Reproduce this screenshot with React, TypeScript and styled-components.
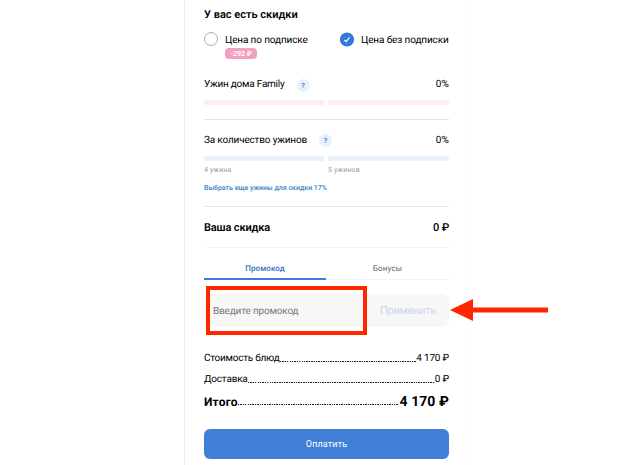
import React from "react";
import styled, { createGlobalStyle } from "styled-components";

const GlobalStyle = createGlobalStyle`
  * { box-sizing: border-box; }
  html, body { margin: 0; background: #fff; overflow: hidden; }
  body {
    font-family: Roboto, "Noto Sans", sans-serif;
    color: #080808;
    text-rendering: geometricPrecision;
  }
`;

const Page = styled.main`
  width: 624px;
  height: 465px;
  padding-left: 184px;
  background: #fff;
`;

const Panel = styled.section`
  width: 286px;
  height: 465px;
  padding: 0 20px 0 19px;
  border-left: 1px solid #ececec;
  border-right: 1px solid #fdfdfd;
`;

const Text = styled.span<{ $size: number; $weight?: number; $color?: string; $spacing?: number }>`
  font-size: ${(p) => p.$size}px;
  font-weight: ${(p) => p.$weight ?? 400};
  color: ${(p) => p.$color ?? "#000"};
  letter-spacing: ${(p) => p.$spacing ?? 0}px;
  line-height: 14px;
  white-space: nowrap;
`;

const Heading = styled.header`
  display: flex;
  align-items: center;
  height: 28px;
  padding-top: 1px;
`;

const Options = styled.div`
  display: grid;
  grid-template-columns: 136px 1fr;
  height: 42px;
  padding-top: 4px;
`;

const Option = styled.label`
  display: grid;
  grid-template-columns: 15px auto;
  grid-template-rows: 16px auto;
  column-gap: 6px;
  align-content: start;
  justify-content: start;
`;

const OptionText = styled(Text)`
  padding-top: 1px;
  line-height: 15px;
`;

const Radio = styled.span`
  width: 14px;
  height: 14px;
  border: 1.5px solid #acacac;
  border-radius: 50%;
`;

const CheckedIcon = styled.svg`
  width: 15px;
  height: 15px;
  display: block;
`;

const Badge = styled.span`
  grid-column: 2;
  display: flex;
  align-items: center;
  justify-content: center;
  width: 32px;
  height: 11px;
  border-radius: 4px;
  background: #f2a0bf;
`;

const Discount = styled.section<{ $height: number }>`
  height: ${(p) => p.$height}px;
  border-bottom: 1px solid #e2e2e2;
`;

const Row = styled.div<{ $height: number; $top?: number }>`
  display: flex;
  align-items: center;
  justify-content: space-between;
  height: ${(p) => p.$height}px;
  padding-top: ${(p) => p.$top ?? 0}px;
`;

const Name = styled.div`
  display: flex;
  align-items: center;
  gap: 12px;
`;

const Help = styled.button`
  width: 13px;
  height: 13px;
  padding: 0;
  border: 0;
  border-radius: 50%;
  background: #e6f1fd;
  color: #3880d8;
  font: 600 8px/13px Roboto, sans-serif;
`;

const Progress = styled.div`
  display: grid;
  grid-template-columns: 120px 121px;
  column-gap: 4px;
`;

const Segment = styled.span<{ $color: string }>`
  height: 5px;
  background: ${(p) => p.$color};
  &:first-child { border-radius: 2px 0 0 2px; }
  &:last-child { border-radius: 0 2px 2px 0; }
`;

const Captions = styled(Progress)`
  padding-top: 2px;
`;

const LinkRow = styled.div`
  display: flex;
  margin-top: 4px;
`;

const Summary = styled.div`
  display: flex;
  align-items: center;
  justify-content: space-between;
  height: 41px;
  padding-top: 1px;
  border-bottom: 1px solid #f5f5f5;
`;

const Tabs = styled.nav`
  display: grid;
  grid-template-columns: 122px 123px;
  height: 32px;
`;

const Tab = styled.div<{ $active?: boolean }>`
  display: flex;
  justify-content: center;
  padding-top: 14px;
  border-bottom: ${(p) => (p.$active ? "2px solid #3b7dda" : "1px solid #f5f2f1")};
`;

const Promo = styled.div`
  position: relative;
  display: grid;
  grid-template-columns: 163px 82px;
  align-items: center;
  height: 33px;
  margin-top: 14px;
  border-radius: 7px;
  background: #f7f7f8;
`;

const PromoField = styled.div`
  display: flex;
  align-items: center;
  height: 33px;
  padding: 2px 0 0 9px;
`;

const Apply = styled.div`
  display: flex;
  justify-content: center;
  padding-top: 1px;
`;

const Highlight = styled.div`
  position: absolute;
  left: 2px;
  top: -8px;
  width: 161px;
  height: 49px;
  border: 4px solid #ff2600;
`;

const Arrow = styled.svg`
  position: absolute;
  left: 246px;
  top: 5px;
  width: 98px;
  height: 22px;
`;

const Costs = styled.div`
  margin-top: 21px;
`;

const CostRow = styled.div<{ $height: number }>`
  display: flex;
  align-items: center;
  height: ${(p) => p.$height}px;
`;

const Leader = styled.span<{ $offset: number }>`
  flex: 1;
  height: 1px;
  margin-top: ${(p) => p.$offset}px;
  background: repeating-linear-gradient(90deg, #222 0 1.3px, #ddd 1.3px 2.4px);
`;

const Pay = styled.button`
  display: flex;
  align-items: center;
  justify-content: center;
  width: 100%;
  height: 30px;
  margin-top: 16px;
  padding: 0;
  border: 0;
  border-radius: 6px;
  background: #417fd9;
  font-family: inherit;
`;

export default function App() {
  return (
    <>
      <GlobalStyle />
      <Page>
        <Panel>
          <Heading><Text $size={11} $weight={600}>У вас есть скидки</Text></Heading>
          <Options>
            <Option>
              <Radio />
              <OptionText $size={10} $spacing={-0.14}>Цена по подписке</OptionText>
              <Badge><Text $size={7} $weight={600} $color="#fff">-292 ₽</Text></Badge>
            </Option>
            <Option>
              <CheckedIcon viewBox="0 0 15 15">
                <circle cx="7" cy="7.5" r="7.1" fill="#347bd9" />
                <path d="M4.2 7.8 6.1 9.7 9.6 5.3" fill="none" stroke="#fff" strokeWidth="1.2" />
              </CheckedIcon>
              <OptionText $size={10} $spacing={-0.13}>Цена без подписки</OptionText>
            </Option>
          </Options>
          <Discount $height={50}>
            <Row $height={30}>
              <Name><Text $size={10} $spacing={-0.23}>Ужин дома Family</Text><Help>?</Help></Name>
              <Text $size={10} $spacing={0.2}>0%</Text>
            </Row>
            <Progress><Segment $color="#fdecf1" /><Segment $color="#fdecf1" /></Progress>
          </Discount>
          <Discount $height={87}>
            <Row $height={36} $top={5}>
              <Name><Text $size={10} $spacing={-0.17}>За количество ужинов</Text><Help>?</Help></Name>
              <Text $size={10} $spacing={0.2}>0%</Text>
            </Row>
            <Progress>
              <Segment $color="#eaf1f9" /><Segment $color="#eaf1f9" />
            </Progress>
            <Captions>
              <Text $size={7} $color="#999" $spacing={0.2}>4 ужина</Text>
              <Text $size={7} $color="#999" $spacing={0.2}>5 ужинов</Text>
            </Captions>
            <LinkRow><Text $size={7} $weight={500} $color="#3983c9">Выбрать еще ужины для скидки 17%</Text></LinkRow>
          </Discount>
          <Summary>
            <Text $size={11} $weight={600} $spacing={-0.15}>Ваша скидка</Text>
            <Text $size={11} $weight={500} $spacing={-0.2}>0 ₽</Text>
          </Summary>
          <Tabs>
            <Tab $active><Text $size={8} $weight={600} $color="#3b7dcc" $spacing={0.1}>Промокод</Text></Tab>
            <Tab><Text $size={8} $color="#666" $spacing={0.2}>Бонусы</Text></Tab>
          </Tabs>
          <Promo>
            <PromoField><Text $size={10} $color="#777" $spacing={-0.17}>Введите промокод</Text></PromoField>
            <Apply><Text $size={11} $color="#cbd5ed" $spacing={-0.25}>Применить</Text></Apply>
            <Highlight />
            <Arrow viewBox="0 0 98 22">
              <path d="M0 11 23 0V8.5H98V13.5H23V22Z" fill="#ff2600" />
            </Arrow>
          </Promo>
          <Costs>
            <CostRow $height={21}><Text $size={10} $spacing={-0.25}>Стоимость блюд</Text><Leader $offset={5} /><Text $size={10} $spacing={-0.2}>4 170 ₽</Text></CostRow>
            <CostRow $height={21}><Text $size={10} $spacing={-0.2}>Доставка</Text><Leader $offset={5} /><Text $size={10} $spacing={-0.2}>0 ₽</Text></CostRow>
            <CostRow $height={23}><Text $size={12} $weight={700} $spacing={0.2}>Итого</Text><Leader $offset={6} /><Text $size={14} $weight={700} $spacing={0.08}>4 170 ₽</Text></CostRow>
          </Costs>
          <Pay><Text $size={9} $color="#fff" $spacing={0.15}>Оплатить</Text></Pay>
        </Panel>
      </Page>
    </>
  );
}
